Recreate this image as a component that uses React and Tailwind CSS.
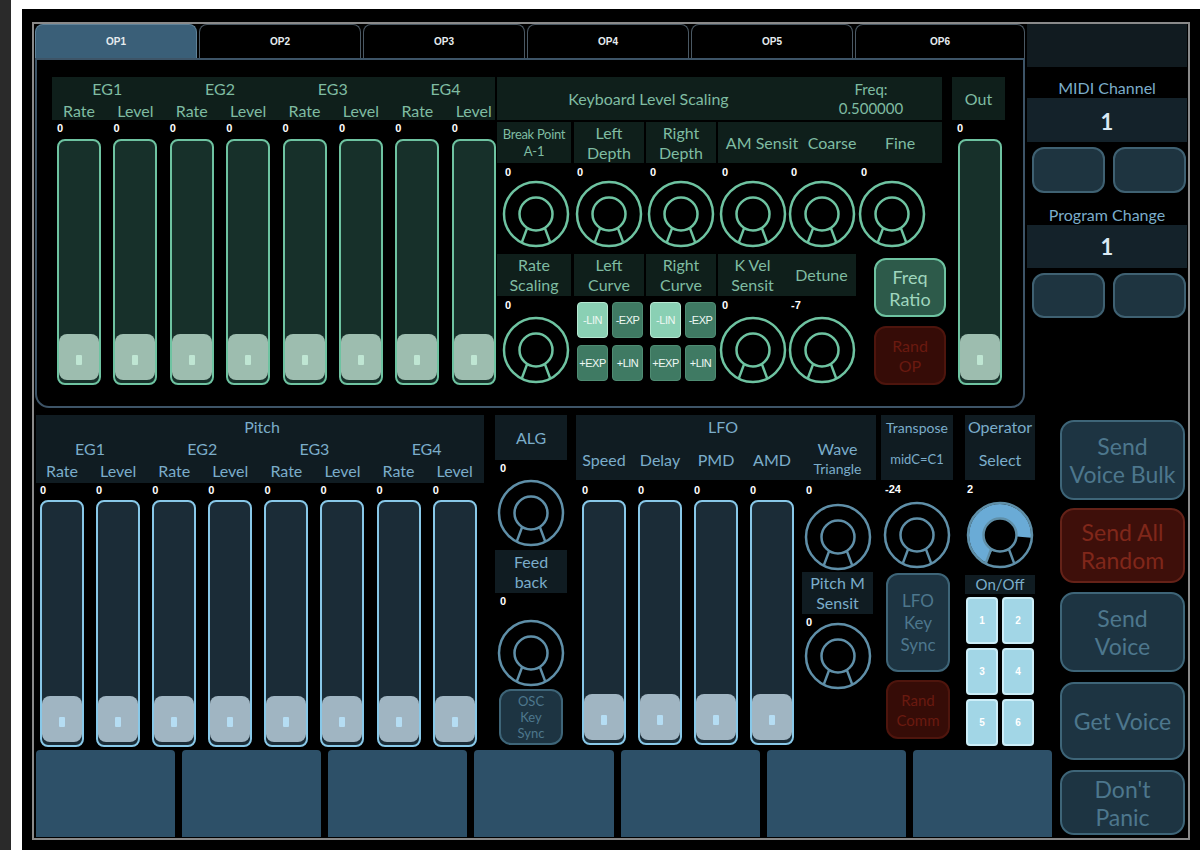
import React from "react";

const G = {
  text: "text-[#7fbca2]",
  panel: "bg-[#0f1f1b]",
  slider: "border-[#6ec3a1] bg-[#17302a]",
  handle: "bg-[#9dbdaf]",
  dot: "bg-[#bfe6d3]",
  knob: "#6ec3a1",
};

const B = {
  text: "text-[#7badca]",
  panel: "bg-[#101c22]",
  slider: "border-[#88c8e8] bg-[#1b2c37]",
  handle: "bg-[#a0b5c2]",
  dot: "bg-[#b5ddf3]",
  knob: "#5f8fa8",
};

const blueBtn = "bg-[#1d3442] border-2 border-[#3e6578] text-[#4d778d]";
const redBtn = "bg-[#360c07] border-2 border-[#4e150d] text-[#6a1a10]";

const Val = ({ v = "0", cls = "" }) => (
  <div className={`text-[11px] leading-[13px] font-bold text-white font-['Liberation_Sans',sans-serif] ${cls}`}>
    {v}
  </div>
);

function Knob({ c, fill, size = 70 }) {
  return (
    <svg width={size} height={size} viewBox="0 0 70 70" className="shrink-0">
      {fill && (
        <path d="M20.9 62.6A31 31 0 1 1 65.9 37.7L51.9 36.5A17 17 0 1 0 27.3 50.1Z" fill={fill} />
      )}
      <circle cx="35" cy="35" r="32" fill="none" stroke={c} strokeWidth="2.5" />
      <circle cx="35" cy="35" r="16.5" fill="none" stroke={c} strokeWidth="2.5" />
      <path d="M26.3 48.6L20.8 63.4M43.7 48.6L49.2 63.4" stroke={c} strokeWidth="2.5" fill="none" />
    </svg>
  );
}

function Slider({ t, h = "h-[246px]" }) {
  return (
    <div className={`w-[44px] ${h} flex flex-col justify-end rounded-[8px] border-2 ${t.slider}`}>
      <div className={`h-[46px] mb-[3px] rounded-[8px] flex items-center justify-center ${t.handle}`}>
        <div className={`w-[6px] h-[10px] mt-[5px] rounded-[1px] ${t.dot}`} />
      </div>
    </div>
  );
}

function Tabs() {
  const tabs = ["OP1", "OP2", "OP3", "OP4", "OP5", "OP6"];
  return (
    <div className="flex gap-[2px] h-[34px]">
      {tabs.map((t, i) => (
        <div
          key={t}
          className={`${i === 5 ? "flex-1" : "w-[162px]"} flex items-center justify-center rounded-t-[8px] border border-b-0 text-[10px] font-bold text-[#e6ecef] font-['Liberation_Sans',sans-serif] ${
            i === 0 ? "bg-[#3a5f78] border-[#5f8299]" : "bg-black border-[#4a5863]"
          }`}
        >
          {t}
        </div>
      ))}
    </div>
  );
}

function CurveGrid({ pl }) {
  const on = "bg-[#8ad0b4] border border-[#b6e8d2]";
  const off = "bg-[#3f7a63] border border-[#4f8c73]";
  const cell = "w-[31px] h-[36px] rounded-[4px] flex items-center justify-center text-[11px] text-[#eef8f3] tracking-[-0.5px] font-['Liberation_Sans',sans-serif]";
  return (
    <div className={`mt-[6px] ${pl} grid grid-cols-[31px_31px] gap-x-[4px] gap-y-[7px]`}>
      <div className={`${cell} ${on}`}>-LIN</div>
      <div className={`${cell} ${off}`}>-EXP</div>
      <div className={`${cell} ${off}`}>+EXP</div>
      <div className={`${cell} ${off}`}>+LIN</div>
    </div>
  );
}

function OperatorPanel() {
  const eg = ["EG1", "EG2", "EG3", "EG4"];
  const rl = ["Rate", "Level", "Rate", "Level", "Rate", "Level", "Rate", "Level"];
  const grid = "grid grid-cols-[repeat(8,44px)] gap-x-[12.4px]";
  return (
    <div className="w-[990px] ml-[1px] flex flex-col">
      <Tabs />
      <div className="h-[350px] border-2 border-[#3d5467] rounded-b-[14px] pl-[15px] pt-[17px] flex">
        {/* EG sliders */}
        <div className="w-[444px] flex flex-col">
          <div className={`h-[43px] w-[443px] ${G.panel} ${G.text} text-[16px] pl-[5px]`}>
            <div className={`${grid} h-[22px] leading-[20px] items-end`}>
              {eg.map((e) => (
                <div key={e} className="col-span-2 text-center">{e}</div>
              ))}
            </div>
            <div className={`${grid} h-[21px] leading-[20px] pt-[2px]`}>
              {rl.map((r, i) => (
                <div key={i} className="flex justify-center whitespace-nowrap">{r}</div>
              ))}
            </div>
          </div>
          <div className={`${grid} pl-[5px] mt-[2px]`}>
            {rl.map((r, i) => (
              <div key={i} className="flex flex-col">
                <Val cls="h-[17px]" />
                <Slider t={G} />
              </div>
            ))}
          </div>
        </div>

        {/* Keyboard level scaling */}
        <div className="ml-[1px] w-[449px] flex flex-col">
          <div className={`h-[43px] w-[445px] flex ${G.panel} ${G.text}`}>
            <div className="w-[303px] flex items-center justify-center text-[16px]">Keyboard Level Scaling</div>
            <div className="flex-1 flex flex-col items-center justify-center text-[15px] leading-[19px]">
              <span>Freq:</span>
              <span>0.500000</span>
            </div>
          </div>

          <div className="mt-[2px] flex">
            <div className="w-[74px] flex flex-col">
              <div className={`h-[41px] ${G.panel} ${G.text} flex flex-col items-center justify-center text-[13px] leading-[17px] tracking-[-0.3px]`}>
                <span>Break Point</span>
                <span>A-1</span>
              </div>
              <Val cls="mt-[3px] pl-[8px]" />
              <div className="flex justify-end"><Knob c={G.knob} /></div>
            </div>
            <div className="ml-[3px] w-[70px] flex flex-col">
              <div className={`h-[41px] ${G.panel} ${G.text} flex flex-col items-center justify-center text-[16px] leading-[20px]`}>
                <span>Left</span>
                <span>Depth</span>
              </div>
              <Val cls="mt-[3px] pl-[3px]" />
              <div className="flex justify-center"><Knob c={G.knob} /></div>
            </div>
            <div className="ml-[2px] w-[70px] flex flex-col">
              <div className={`h-[41px] ${G.panel} ${G.text} flex flex-col items-center justify-center text-[16px] leading-[20px]`}>
                <span>Right</span>
                <span>Depth</span>
              </div>
              <Val cls="mt-[3px] pl-[4px]" />
              <div className="flex justify-center"><Knob c={G.knob} /></div>
            </div>
            <div className="ml-[2px] w-[224px] flex flex-col">
              <div className={`h-[41px] ${G.panel} ${G.text} flex items-center text-[16px]`}>
                <div className="w-[88px] text-center">AM Sensit</div>
                <div className="w-[52px] text-center">Coarse</div>
                <div className="w-[84px] text-center">Fine</div>
              </div>
              <div className="flex">
                {["w-[69px]", "w-[70px]", "w-[70px]"].map((w, i) => (
                  <div key={i} className={`${w} flex flex-col`}>
                    <Val cls="mt-[3px] pl-[4px]" />
                    <div className="flex justify-center"><Knob c={G.knob} /></div>
                  </div>
                ))}
              </div>
            </div>
          </div>

          <div className="mt-[5px] flex">
            <div className="w-[74px] flex flex-col">
              <div className={`h-[42px] ${G.panel} ${G.text} flex flex-col items-center justify-center text-[16px] leading-[20px]`}>
                <span>Rate</span>
                <span>Scaling</span>
              </div>
              <Val cls="mt-[3px] pl-[8px] h-[13px]" />
              <div className="mt-[3px] flex justify-end"><Knob c={G.knob} /></div>
            </div>
            <div className="ml-[3px] w-[70px] flex flex-col">
              <div className={`h-[42px] ${G.panel} ${G.text} flex flex-col items-center justify-center text-[16px] leading-[20px]`}>
                <span>Left</span>
                <span>Curve</span>
              </div>
              <CurveGrid pl="pl-[3px]" />
            </div>
            <div className="ml-[2px] w-[70px] flex flex-col">
              <div className={`h-[42px] ${G.panel} ${G.text} flex flex-col items-center justify-center text-[16px] leading-[20px]`}>
                <span>Right</span>
                <span>Curve</span>
              </div>
              <CurveGrid pl="pl-[4px]" />
            </div>
            <div className="ml-[2px] w-[138px] flex flex-col">
              <div className={`h-[42px] ${G.panel} ${G.text} flex items-center text-[16px] leading-[20px]`}>
                <div className="w-[69px] flex flex-col items-center">
                  <span>K Vel</span>
                  <span>Sensit</span>
                </div>
                <div className="w-[69px] text-center">Detune</div>
              </div>
              <div className="flex">
                {["0", "-7"].map((v, i) => (
                  <div key={i} className="w-[69px] flex flex-col">
                    <Val v={v} cls="mt-[3px] pl-[4px] h-[13px]" />
                    <div className="mt-[3px] flex justify-center"><Knob c={G.knob} /></div>
                  </div>
                ))}
              </div>
            </div>
            <div className="ml-[18px] w-[72px] flex flex-col">
              <div className="mt-[4px] h-[59px] rounded-[12px] bg-[#2d5a4a] border-2 border-[#6ec3a1] text-[#a0d6be] text-[18px] leading-[22px] flex flex-col items-center justify-center">
                <span>Freq</span>
                <span>Ratio</span>
              </div>
              <div className={`mt-[9px] h-[59px] rounded-[12px] ${redBtn} text-[16px] leading-[20px] flex flex-col items-center justify-center`}>
                <span>Rand</span>
                <span>OP</span>
              </div>
            </div>
          </div>
        </div>

        {/* Out */}
        <div className="ml-[6px] w-[53px] flex flex-col">
          <div className={`h-[43px] ${G.panel} ${G.text} flex items-center justify-center text-[16px]`}>Out</div>
          <Val cls="mt-[2px] h-[17px] pl-[5px]" />
          <div className="pl-[6px]"><Slider t={G} /></div>
        </div>
      </div>
    </div>
  );
}

function MidiColumn() {
  const btn = "w-[73px] rounded-[12px] bg-[#1e3440] border-2 border-[#3f6172]";
  return (
    <div className="ml-[2px] w-[160px] flex flex-col">
      <div className="h-[43px] bg-[#111b20]" />
      <div className={`h-[31px] flex items-end justify-center ${B.text} text-[16px] leading-[20px]`}>MIDI Channel</div>
      <div className="h-[44px] bg-[#14222a] flex items-center justify-center pt-[3px] text-[22px] font-bold text-[#dbe9f3]">1</div>
      <div className="mt-[5px] h-[46px] flex gap-[8px] pl-[5px]">
        <div className={btn} />
        <div className={btn} />
      </div>
      <div className={`h-[32px] flex items-end justify-center ${B.text} text-[16px] leading-[20px]`}>Program Change</div>
      <div className="h-[43px] bg-[#14222a] flex items-center justify-center text-[22px] font-bold text-[#dbe9f3]">1</div>
      <div className="mt-[5px] h-[45px] flex gap-[8px] pl-[5px]">
        <div className={btn} />
        <div className={btn} />
      </div>
    </div>
  );
}

function PitchColumn() {
  const eg = ["EG1", "EG2", "EG3", "EG4"];
  const rl = ["Rate", "Level", "Rate", "Level", "Rate", "Level", "Rate", "Level"];
  const grid = "grid grid-cols-[repeat(8,44px)] gap-x-[12.1px]";
  return (
    <div className="w-[448px] flex flex-col">
      <div className={`h-[68px] ${B.panel} ${B.text} text-[16px] leading-[20px] pl-[4px]`}>
        <div className="h-[23px] flex items-center justify-center">Pitch</div>
        <div className={`${grid} h-[22px] items-center`}>
          {eg.map((e) => (
            <div key={e} className="col-span-2 text-center">{e}</div>
          ))}
        </div>
        <div className={`${grid} h-[22px] items-center`}>
          {rl.map((r, i) => (
            <div key={i} className="flex justify-center whitespace-nowrap">{r}</div>
          ))}
        </div>
      </div>
      <div className={`${grid} pl-[4px]`}>
        {rl.map((r, i) => (
          <div key={i} className="flex flex-col">
            <Val cls="h-[17px] pt-[1px]" />
            <Slider t={B} h="h-[247px]" />
          </div>
        ))}
      </div>
    </div>
  );
}

function AlgColumn() {
  return (
    <div className="ml-[11px] w-[72px] flex flex-col">
      <div className={`h-[45px] ${B.panel} ${B.text} flex items-center justify-center text-[16px]`}>ALG</div>
      <Val cls="h-[18px] pt-[2px] pl-[5px]" />
      <div className="flex justify-center"><Knob c={B.knob} /></div>
      <div className={`mt-[2px] h-[43px] ${B.panel} ${B.text} flex flex-col items-center justify-center text-[16px] leading-[20px]`}>
        <span>Feed</span>
        <span>back</span>
      </div>
      <Val cls="h-[25px] pt-[2px] pl-[5px]" />
      <div className="flex justify-center"><Knob c={B.knob} /></div>
      <div className={`mt-[1px] ml-[4px] w-[64px] h-[56px] rounded-[12px] ${blueBtn} flex flex-col items-center justify-center text-[13px] leading-[16px]`}>
        <span>OSC</span>
        <span>Key</span>
        <span>Sync</span>
      </div>
    </div>
  );
}

function LfoColumn() {
  const names = ["Speed", "Delay", "PMD", "AMD"];
  return (
    <div className="ml-[9px] w-[300px] flex flex-col">
      <div className={`h-[65px] ${B.panel} ${B.text} text-[16px]`}>
        <div className="h-[24px] flex items-center justify-center pr-[6px]">LFO</div>
        <div className="h-[41px] flex pl-[6px]">
          {names.map((n, i) => (
            <div key={n} className={`w-[44px] ${i > 0 ? "ml-[12px]" : ""} flex items-center justify-center whitespace-nowrap`}>
              {n}
            </div>
          ))}
          <div className="ml-[8px] w-[71px] flex flex-col items-center leading-[20px]">
            <span>Wave</span>
            <span className="text-[14px]">Triangle</span>
          </div>
        </div>
      </div>
      <div className="flex pl-[6px]">
        {names.map((n, i) => (
          <div key={n} className={`flex flex-col ${i > 0 ? "ml-[12px]" : ""}`}>
            <Val cls="h-[20px] pt-[4px]" />
            <Slider t={B} h="h-[245px]" />
          </div>
        ))}
        <div className="ml-[8px] w-[71px] flex flex-col">
          <Val cls="h-[20px] pt-[4px] pl-[4px]" />
          <div className="mt-[2px] flex justify-center"><Knob c={B.knob} /></div>
          <div className={`h-[42px] ${B.panel} ${B.text} flex flex-col items-center justify-center text-[16px] leading-[20px]`}>
            <span>Pitch M</span>
            <span>Sensit</span>
          </div>
          <Val cls="h-[7px] pt-[2px] pl-[4px]" />
          <div className="flex justify-center"><Knob c={B.knob} /></div>
        </div>
      </div>
    </div>
  );
}

function TransposeColumn() {
  return (
    <div className="ml-[5px] w-[72px] flex flex-col">
      <div className={`h-[65px] ${B.panel} ${B.text}`}>
        <div className="h-[24px] flex items-center justify-center text-[14px]">Transpose</div>
        <div className="h-[41px] flex items-center justify-center text-[13px]">midC=C1</div>
      </div>
      <Val v="-24" cls="h-[20px] pt-[3px] pl-[4px]" />
      <div className="flex justify-center"><Knob c={B.knob} /></div>
      <div className={`mt-[3px] ml-[5px] w-[64px] h-[99px] rounded-[12px] ${blueBtn} flex flex-col items-center justify-center text-[17px] leading-[22px]`}>
        <span>LFO</span>
        <span>Key</span>
        <span>Sync</span>
      </div>
      <div className={`mt-[8px] ml-[5px] w-[64px] h-[59px] rounded-[12px] ${redBtn} flex flex-col items-center justify-center text-[15px] leading-[20px]`}>
        <span>Rand</span>
        <span>Comm</span>
      </div>
    </div>
  );
}

function OperatorColumn() {
  return (
    <div className="ml-[12px] w-[70px] flex flex-col">
      <div className={`h-[65px] ${B.panel} ${B.text} text-[16px]`}>
        <div className="h-[24px] flex items-center justify-center">Operator</div>
        <div className="h-[41px] flex items-center justify-center">Select</div>
      </div>
      <Val v="2" cls="h-[20px] pt-[3px] pl-[2px]" />
      <div className="flex justify-center"><Knob c={B.knob} fill="#6aabd6" /></div>
      <div className={`mt-[5px] h-[19px] ${B.panel} ${B.text} flex items-center justify-center text-[15px] leading-[19px]`}>On/Off</div>
      <div className="mt-[3px] pl-[1px] grid grid-cols-[32px_32px] gap-x-[4px] gap-y-[4px]">
        {["1", "2", "3", "4", "5", "6"].map((n) => (
          <div
            key={n}
            className="h-[47px] rounded-[4px] bg-[#a2d6e6] border-2 border-[#cdeef8] flex items-center justify-center text-[10px] font-bold text-white font-['Liberation_Sans',sans-serif]"
          >
            {n}
          </div>
        ))}
      </div>
    </div>
  );
}

function RightButtons() {
  const base = "rounded-[14px] flex flex-col items-center justify-center text-[23px] leading-[28px]";
  return (
    <div className="ml-[8px] w-[125px] flex flex-col pt-[5px]">
      <div className={`h-[80px] ${base} ${blueBtn}`}>
        <span>Send</span>
        <span className="whitespace-nowrap">Voice Bulk</span>
      </div>
      <div className={`mt-[8px] h-[75px] ${base} bg-[#3e0f0a] border-2 border-[#642218] text-[#80271a]`}>
        <span>Send All</span>
        <span>Random</span>
      </div>
      <div className={`mt-[9px] h-[80px] ${base} ${blueBtn}`}>
        <span>Send</span>
        <span>Voice</span>
      </div>
      <div className={`mt-[10px] h-[78px] ${base} ${blueBtn}`}>
        <span>Get Voice</span>
      </div>
      <div className={`mt-[10px] h-[65px] ${base} ${blueBtn}`}>
        <span>Don't</span>
        <span>Panic</span>
      </div>
    </div>
  );
}

export default function App() {
  return (
    <div className="w-[1200px] h-[850px] flex overflow-hidden bg-black font-['Lato',sans-serif]">
      <div className="w-[11px] bg-[#2a2a2a]" />
      <div className="w-[11px] bg-white" />
      <div className="flex-1 flex flex-col">
        <div className="h-[9px] bg-white" />
        <div className="flex-1 pl-[10px] pt-[13px]">
          <div className="w-[1158px] h-[818px] border-2 border-[#8a8a8a] flex flex-col">
            <div className="flex h-[384px]">
              <OperatorPanel />
              <MidiColumn />
            </div>
            <div className="mt-[7px] flex">
              <div className="ml-[2px] w-[1016px] flex flex-col">
                <div className="flex h-[332px]">
                  <PitchColumn />
                  <AlgColumn />
                  <LfoColumn />
                  <TransposeColumn />
                  <OperatorColumn />
                </div>
                <div className="mt-[3px] h-[87px] flex gap-[7px]">
                  {[0, 1, 2, 3, 4, 5, 6].map((i) => (
                    <div key={i} className="flex-1 rounded-t-[4px] bg-[#2d5068]" />
                  ))}
                </div>
              </div>
              <RightButtons />
            </div>
          </div>
        </div>
      </div>
    </div>
  );
}
